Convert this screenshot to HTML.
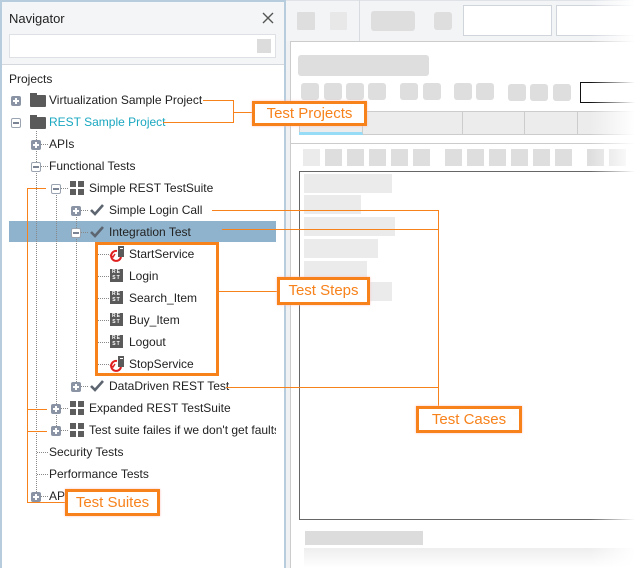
<!DOCTYPE html>
<html><head><meta charset="utf-8"><style>
*{margin:0;padding:0;box-sizing:border-box}
body{width:643px;height:568px;overflow:hidden;background:#fff;position:relative;font-family:"Liberation Sans","DejaVu Sans",sans-serif;font-size:12px;color:#222}
.a{position:absolute}
.t{position:absolute;white-space:nowrap;line-height:14px;font-size:12px}
.exp{position:absolute;width:10px;height:10px;background:#8a94a4;border-radius:2px}
.exp::before{content:"";position:absolute;left:2px;top:4px;width:6px;height:2px;background:#fff}
.exp.p::after{content:"";position:absolute;left:4px;top:2px;width:2px;height:6px;background:#fff}
.exp.m{background:#fff;border:1px solid #9aa3b0}
.exp.m::before{left:1px;top:3px;background:#7a8494}
.vd{position:absolute;width:0;border-left:1px dotted #888}
.hd{position:absolute;height:0;border-top:1px dotted #888}
.fold{position:absolute;width:16px;height:12px;background:#5a5a5a;border-radius:1px}
.fold::before{content:"";position:absolute;left:0;top:-2px;width:7px;height:3px;background:#5a5a5a}
.grid{position:absolute;width:14px;height:14px;background:
linear-gradient(#fff,#fff) 6px 0/2px 14px no-repeat,linear-gradient(#fff,#fff) 0 6px/14px 2px no-repeat,#5d5d5d}
.chk{position:absolute;width:14px;height:12px}
.rest{position:absolute;width:13px;height:13px;background:#5a5a5a;color:#fff;font-size:5px;line-height:6px;text-align:center;font-weight:bold;letter-spacing:1px;padding-top:0}
.ol{position:absolute;background:#f7821b}
.box{position:absolute;border:3px solid #f7821b;background:#fff;color:#f7821b;font-size:15px;line-height:20px;text-align:center;box-shadow:0 0 2px #fbb}
.g{position:absolute;background:#dedede;border-radius:3px}
.gl{position:absolute;background:#ebebeb}
</style></head><body>
<!-- left panel -->
<div class="a" style="left:0;top:0;width:286px;height:568px;border-left:2px solid #b7cddd;border-right:2px solid #b7cddd;border-top:2px solid #b7cddd;background:#fff"></div>
<div class="a" style="left:2px;top:2px;width:282px;height:63px;background:#f4f5f7;border-bottom:1px solid #d5d9de"></div>
<div class="t" style="left:9px;top:12px;font-size:13px">Navigator</div>
<svg class="a" style="left:262px;top:12px" width="12" height="12"><path d="M1 1L11 11M11 1L1 11" stroke="#555" stroke-width="1.4"/></svg>
<div class="a" style="left:9px;top:34px;width:267px;height:24px;background:#fff;border:1px solid #dde0e4"></div>
<div class="a" style="left:257px;top:39px;width:14px;height:14px;background:#dcdcdc"></div>
<div class="t" style="left:9px;top:72px">Projects</div>

<!-- highlight -->
<div class="a" style="left:9px;top:221px;width:267px;height:21px;background:#8fb3cc"></div>

<!-- dotted lines -->
<div class="vd" style="left:36px;top:131px;height:365px"></div>
<div class="vd" style="left:56px;top:195px;height:235px"></div>
<div class="vd" style="left:76px;top:217px;height:169px"></div>
<div class="hd" style="left:40px;top:144px;width:8px"></div>
<div class="hd" style="left:40px;top:166px;width:8px"></div>
<div class="hd" style="left:60px;top:188px;width:8px"></div>
<div class="hd" style="left:80px;top:210px;width:8px"></div>
<div class="hd" style="left:80px;top:232px;width:8px"></div>
<div class="hd" style="left:97px;top:254px;width:12px"></div>
<div class="hd" style="left:97px;top:276px;width:12px"></div>
<div class="hd" style="left:97px;top:298px;width:12px"></div>
<div class="hd" style="left:97px;top:320px;width:12px"></div>
<div class="hd" style="left:97px;top:342px;width:12px"></div>
<div class="hd" style="left:97px;top:364px;width:12px"></div>
<div class="hd" style="left:80px;top:386px;width:8px"></div>
<div class="hd" style="left:60px;top:408px;width:8px"></div>
<div class="hd" style="left:60px;top:430px;width:8px"></div>
<div class="hd" style="left:37px;top:452px;width:11px"></div>
<div class="hd" style="left:37px;top:474px;width:11px"></div>
<div class="hd" style="left:40px;top:496px;width:8px"></div>

<!-- rows -->
<div class="exp p" style="left:11px;top:96px"></div><div class="fold" style="left:30px;top:95px"></div><div class="t" style="left:49px;top:93px">Virtualization Sample Project</div>
<div class="exp m" style="left:11px;top:118px"></div><div class="fold" style="left:30px;top:117px"></div><div class="t" style="left:49px;top:115px;color:#1aa7c0">REST Sample Project</div>
<div class="exp p" style="left:31px;top:140px"></div><div class="t" style="left:49px;top:137px">APIs</div>
<div class="exp m" style="left:31px;top:162px"></div><div class="t" style="left:49px;top:159px">Functional Tests</div>
<div class="exp m" style="left:51px;top:184px"></div><div class="grid" style="left:70px;top:181px"></div><div class="t" style="left:89px;top:181px">Simple REST TestSuite</div>
<div class="exp p" style="left:71px;top:206px"></div><svg class="chk" style="left:90px;top:204px"><path d="M1 6L5 10L13 1" stroke="#5d6570" stroke-width="2.6" fill="none"/></svg><div class="t" style="left:109px;top:203px">Simple Login Call</div>
<div class="exp m" style="left:71px;top:228px"></div><svg class="chk" style="left:90px;top:226px"><path d="M1 6L5 10L13 1" stroke="#5d6570" stroke-width="2.6" fill="none"/></svg><div class="t" style="left:109px;top:225px">Integration Test</div>

<svg class="a" style="left:109px;top:246px" width="16" height="16"><path d="M8 5A5 5 0 1 0 12 11" stroke="#e02020" stroke-width="2" fill="none"/><path d="M1 9L4 11L6 8" stroke="#e02020" stroke-width="1.5" fill="none"/><rect x="9" y="0" width="6" height="11" fill="#5a5a5a"/><rect x="11" y="2" width="3" height="1" fill="#fff"/></svg><div class="t" style="left:129px;top:247px">StartService</div>
<div class="rest" style="left:110px;top:269px">RE<br>ST</div><div class="t" style="left:129px;top:269px">Login</div>
<div class="rest" style="left:110px;top:291px">RE<br>ST</div><div class="t" style="left:129px;top:291px">Search_Item</div>
<div class="rest" style="left:110px;top:313px">RE<br>ST</div><div class="t" style="left:129px;top:313px">Buy_Item</div>
<div class="rest" style="left:110px;top:335px">RE<br>ST</div><div class="t" style="left:129px;top:335px">Logout</div>
<svg class="a" style="left:109px;top:356px" width="16" height="16"><path d="M8 5A5 5 0 1 0 12 11" stroke="#e02020" stroke-width="2" fill="none"/><path d="M1 9L4 11L6 8" stroke="#e02020" stroke-width="1.5" fill="none"/><rect x="9" y="0" width="6" height="11" fill="#5a5a5a"/><rect x="11" y="2" width="3" height="1" fill="#fff"/></svg><div class="t" style="left:129px;top:357px">StopService</div>
<div class="exp p" style="left:71px;top:382px"></div><svg class="chk" style="left:90px;top:380px"><path d="M1 6L5 10L13 1" stroke="#5d6570" stroke-width="2.6" fill="none"/></svg><div class="t" style="left:109px;top:379px">DataDriven REST Test</div>
<div class="exp p" style="left:51px;top:404px"></div><div class="grid" style="left:70px;top:401px"></div><div class="t" style="left:89px;top:401px">Expanded REST TestSuite</div>
<div class="exp p" style="left:51px;top:426px"></div><div class="grid" style="left:70px;top:423px"></div><div class="t" style="left:89px;top:423px;width:187px;overflow:hidden">Test suite failes if we don't get faults</div>
<div class="t" style="left:49px;top:445px">Security Tests</div>
<div class="t" style="left:49px;top:467px">Performance Tests</div>
<div class="exp p" style="left:31px;top:492px"></div><div class="t" style="left:49px;top:489px">AP</div>

<!-- right side -->
<div class="a" style="left:286px;top:0;width:357px;height:41px;background:#f3f4f6;border-top:1px solid #dfe3e8"></div>
<div class="a" style="left:359px;top:0;width:1px;height:41px;background:#d8dbe0"></div>
<div class="g" style="left:297px;top:12px;width:18px;height:18px;border-radius:1px"></div>
<div class="g" style="left:330px;top:12px;width:17px;height:18px;background:#e8e8e8;border-radius:1px"></div>
<div class="g" style="left:371px;top:11px;width:44px;height:20px"></div>
<div class="g" style="left:434px;top:12px;width:18px;height:18px"></div>
<div class="a" style="left:463px;top:5px;width:89px;height:31px;background:#fff;border:1px solid #d0d5dc"></div>
<div class="a" style="left:556px;top:5px;width:90px;height:31px;background:#fff;border:1px solid #d0d5dc"></div>
<div class="a" style="left:290px;top:41px;width:353px;height:527px;background:#fff;border-left:1px solid #ccc;border-top:1px solid #ccc"></div>
<div class="a" style="left:286px;top:41px;width:4px;height:527px;background:#f0f1f3"></div>
<div class="g" style="left:298px;top:55px;width:131px;height:21px"></div>
<div class="g" style="left:301px;top:83px;width:18px;height:17px"></div><div class="g" style="left:324px;top:83px;width:18px;height:17px"></div><div class="g" style="left:346px;top:83px;width:18px;height:17px"></div><div class="g" style="left:368px;top:83px;width:18px;height:17px"></div>
<div class="g" style="left:400px;top:83px;width:18px;height:17px"></div><div class="g" style="left:423px;top:83px;width:18px;height:17px"></div>
<div class="g" style="left:454px;top:83px;width:18px;height:17px"></div><div class="g" style="left:476px;top:83px;width:18px;height:17px"></div>
<div class="g" style="left:508px;top:84px;width:18px;height:17px"></div><div class="g" style="left:530px;top:84px;width:18px;height:17px"></div><div class="g" style="left:553px;top:84px;width:18px;height:17px"></div>
<div class="a" style="left:580px;top:82px;width:63px;height:21px;border:1px solid #111;border-right:none"></div>
<div class="a" style="left:299px;top:111px;width:344px;height:24px;background:#ececec;border:1px solid #ccc"></div>
<div class="a" style="left:299px;top:111px;width:64px;height:24px;border-bottom:3px solid #97dcf6;border-right:1px solid #ccc"></div>
<div class="a" style="left:462px;top:111px;width:1px;height:24px;background:#ccc"></div>
<div class="a" style="left:524px;top:111px;width:1px;height:24px;background:#ccc"></div>
<div class="a" style="left:577px;top:111px;width:1px;height:24px;background:#ccc"></div>
<div class="a" style="left:290px;top:143px;width:353px;height:1px;background:#ccc"></div>
<div class="gl" style="left:303px;top:149px;width:17px;height:17px"></div>
<div class="g" style="left:325px;top:149px;width:17px;height:17px;border-radius:0"></div><div class="g" style="left:347px;top:149px;width:17px;height:17px;border-radius:0"></div><div class="g" style="left:369px;top:149px;width:17px;height:17px;border-radius:0"></div><div class="g" style="left:391px;top:149px;width:17px;height:17px;border-radius:0"></div><div class="g" style="left:413px;top:149px;width:17px;height:17px;border-radius:0"></div>
<div class="g" style="left:445px;top:149px;width:17px;height:17px;border-radius:0"></div><div class="g" style="left:467px;top:149px;width:17px;height:17px;border-radius:0"></div><div class="g" style="left:489px;top:149px;width:17px;height:17px;border-radius:0"></div><div class="g" style="left:511px;top:149px;width:17px;height:17px;border-radius:0"></div><div class="g" style="left:533px;top:149px;width:17px;height:17px;border-radius:0"></div><div class="g" style="left:555px;top:149px;width:17px;height:17px;border-radius:0"></div>
<div class="g" style="left:587px;top:149px;width:17px;height:17px;border-radius:0"></div><div class="g" style="left:609px;top:149px;width:17px;height:17px;border-radius:0"></div>
<div class="a" style="left:299px;top:171px;width:344px;height:349px;border:1px solid #666;border-right:none;background:#fff"></div>
<div class="gl" style="left:304px;top:174px;width:88px;height:19px"></div>
<div class="gl" style="left:304px;top:195px;width:57px;height:19px"></div>
<div class="gl" style="left:304px;top:217px;width:91px;height:19px"></div>
<div class="gl" style="left:304px;top:239px;width:74px;height:19px"></div>
<div class="gl" style="left:304px;top:261px;width:63px;height:19px"></div>
<div class="gl" style="left:304px;top:282px;width:88px;height:19px"></div>
<div class="a" style="left:305px;top:531px;width:118px;height:14px;background:#dcdcdc"></div>
<div class="a" style="left:304px;top:548px;width:339px;height:20px;background:linear-gradient(#eee,#fff)"></div>
<!-- fade right -->
<div class="a" style="left:590px;top:0;width:53px;height:568px;background:linear-gradient(90deg,rgba(255,255,255,0),#fff 85%)"></div>

<!-- callout lines -->
<div class="ol" style="left:203px;top:100px;width:31px;height:1px"></div>
<div class="ol" style="left:163px;top:122px;width:71px;height:1px"></div>
<div class="ol" style="left:233px;top:100px;width:1px;height:23px"></div>
<div class="ol" style="left:233px;top:112px;width:20px;height:1px"></div>
<div class="ol" style="left:212px;top:210px;width:227px;height:1px"></div>
<div class="ol" style="left:222px;top:229px;width:217px;height:1px"></div>
<div class="ol" style="left:226px;top:387px;width:213px;height:1px"></div>
<div class="ol" style="left:438px;top:210px;width:1px;height:198px"></div>
<div class="ol" style="left:218px;top:291px;width:60px;height:1px"></div>
<div class="ol" style="left:27px;top:188px;width:1px;height:315px"></div>
<div class="ol" style="left:27px;top:188px;width:19px;height:1px"></div>
<div class="ol" style="left:27px;top:409px;width:20px;height:1px"></div>
<div class="ol" style="left:27px;top:431px;width:20px;height:1px"></div>
<div class="ol" style="left:27px;top:502px;width:40px;height:1px"></div>
<div class="a" style="left:95px;top:242px;width:124px;height:134px;border:3px solid #f7821b"></div>
<div class="box" style="left:252px;top:101px;width:115px;height:25px">Test Projects</div>
<div class="box" style="left:277px;top:277px;width:93px;height:28px;line-height:22px">Test Steps</div>
<div class="box" style="left:416px;top:406px;width:106px;height:27px;line-height:21px">Test Cases</div>
<div class="box" style="left:65px;top:489px;width:95px;height:27px;line-height:21px">Test Suites</div>
</body></html>
